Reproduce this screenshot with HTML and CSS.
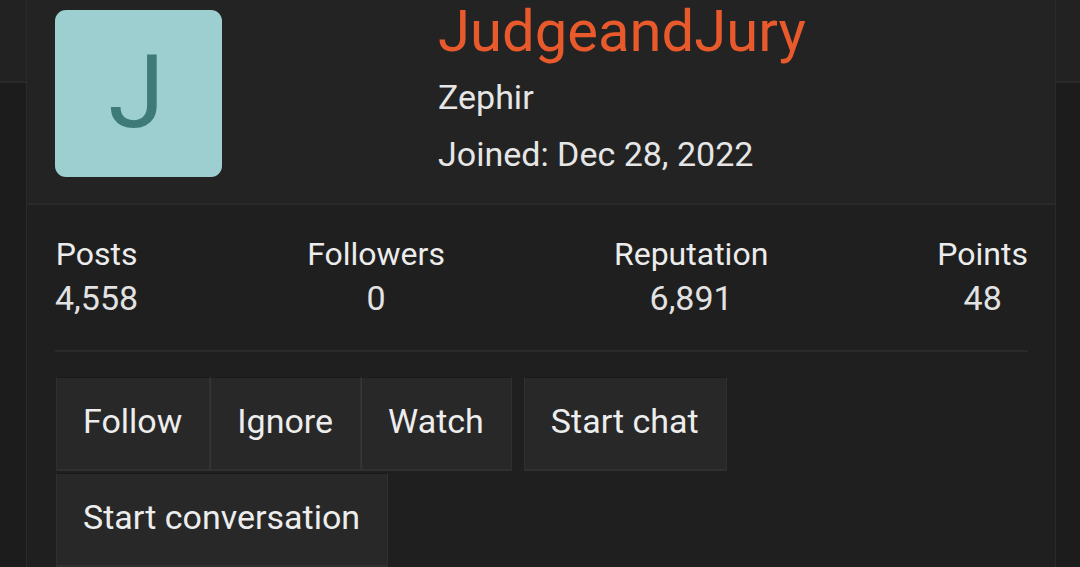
FILE: index.html
```html
<!DOCTYPE html>
<html>
<head>
<meta charset="utf-8">
<link rel="stylesheet" href="styles.css">
</head>
<body>
<div class="card">
  <div class="head">
    <div class="avatar"><span>J</span></div>
    <div class="info">
      <div class="name">JudgeandJury</div>
      <div class="title">Zephir</div>
      <div class="joined">Joined: Dec 28, 2022</div>
    </div>
  </div>
  <div class="body">
    <div class="stats">
      <div class="stat"><div class="label">Posts</div><div class="val">4,558</div></div>
      <div class="stat"><div class="label">Followers</div><div class="val">0</div></div>
      <div class="stat"><div class="label">Reputation</div><div class="val">6,891</div></div>
      <div class="stat"><div class="label">Points</div><div class="val">48</div></div>
    </div>
    <div class="actions">
      <div class="group">
        <a class="btn">Follow</a><a class="btn">Ignore</a><a class="btn">Watch</a>
      </div>
      <a class="btn">Start chat</a>
      <a class="btn">Start conversation</a>
    </div>
  </div>
</div>
</body>
</html>
```
FILE: styles.css
```css
html, body {
  margin: 0;
  height: 100%;
}
body {
  background: linear-gradient(to bottom, #222222 0, #222222 81px, #292929 81px, #292929 83px, #1c1c1c 83px);
  font-family: Roboto, "Noto Sans", sans-serif;
  color: #e8e8e8;
  overflow: hidden;
}
.card {
  margin: 0 24px 0 26px;
  height: 100%;
  border-left: 1px solid #2a2a2a;
  border-right: 1px solid #2a2a2a;
  background: #1f1f1f;
}
.head {
  display: flex;
  height: 205px;
  background: #232323;
  border-bottom: 2px solid #2a2a2a;
  padding: 10px 0 0 28px;
  box-sizing: border-box;
}
.avatar {
  width: 167px;
  height: 167px;
  border-radius: 11px;
  background: #9dcfd0;
  display: flex;
  align-items: center;
  justify-content: center;
}
.avatar span {
  font-size: 102px;
  color: #3e7a78;
  line-height: 1;
  margin-top: -4px;
  margin-left: -4px;
}
.info {
  margin-left: 216px;
}
.name {
  font-size: 58px;
  color: #e8592b;
  line-height: 1;
  margin-top: -8px;
}
.title {
  font-size: 34px;
  color: #e6e6e6;
  line-height: 1;
  margin-top: 20px;
}
.joined {
  font-size: 34px;
  color: #e6e6e6;
  line-height: 1;
  margin-top: 23px;
}
.body {
  padding: 0 27px 0 29px;
}
.stats {
  display: flex;
  justify-content: space-between;
  padding: 33px 0 35px;
  margin-left: -1px;
  border-bottom: 2px solid #2a2a2a;
}
.stat {
  text-align: center;
  line-height: 1;
}
.label {
  font-size: 32px;
  color: #ececec;
}
.val {
  font-size: 34px;
  color: #e2e2e2;
  margin-top: 11px;
}
.actions {
  display: flex;
  flex-wrap: wrap;
  gap: 2px 12px;
  padding-top: 25px;
}
.group {
  display: flex;
}
.btn {
  display: block;
  font-size: 34px;
  line-height: 1;
  color: #ededed;
  background: #282828;
  padding: 26px 27px 31px 26px;
  border: 1px solid #303030;
  border-top: 1px solid #1a1a1a;
  border-bottom: 2px solid #303030;
}
.group .btn + .btn {
  border-left: 1px solid #363636;
}
```
